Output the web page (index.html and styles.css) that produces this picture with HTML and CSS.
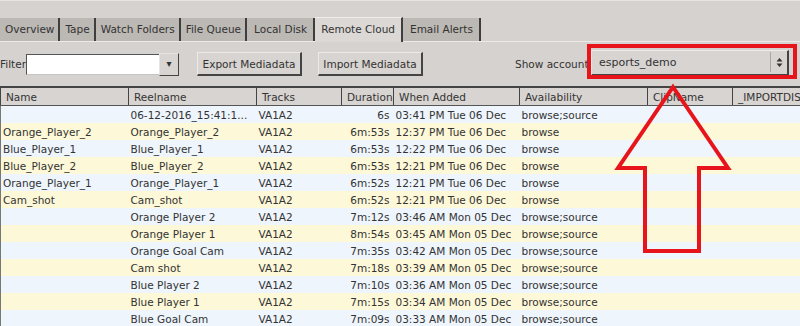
FILE: index.html
```html
<!DOCTYPE html>
<html lang="en">
<head>
    <meta charset="UTF-8">
    <title>Remote Cloud</title>
    <link rel="stylesheet" href="styles.css">
</head>
<body>
    <div class="window">
        <div class="tabs">
            <div class="tab">Overview</div>
            <div class="tab">Tape</div>
            <div class="tab">Watch Folders</div>
            <div class="tab">File Queue</div>
            <div class="tab wide">Local Disk</div>
            <div class="tab active">Remote Cloud</div>
            <div class="tab wide">Email Alerts</div>
        </div>

        <div class="toolbar">
            <label class="filter-label" for="filter">Filter</label>
            <input class="filter-input" id="filter" type="text">
            <div class="drop-btn">&#9662;</div>
            <button class="btn export">Export Mediadata</button>
            <button class="btn import">Import Mediadata</button>
            <span class="account-label">Show account:</span>
            <div class="combo">
                <span class="combo-text">esports_demo</span>
                <span class="combo-spin">
                    <svg width="7" height="11" viewBox="0 0 7 11"><path d="M0.5 4.5 L3.5 1 L6.5 4.5 Z M0.5 6.5 L3.5 10 L6.5 6.5 Z" fill="#333"/></svg>
                </span>
            </div>
        </div>

        <table class="grid">
            <colgroup>
                <col style="width:128px"><col style="width:128px"><col style="width:85px"><col style="width:52px">
                <col style="width:126px"><col style="width:128px"><col style="width:85px"><col style="width:68px">
            </colgroup>
            <thead>
                <tr>
                    <th>Name</th><th>Reelname</th><th>Tracks</th><th>Duration</th>
                    <th>When Added</th><th>Availability</th><th>ClipName</th><th>_IMPORTDIS</th>
                </tr>
            </thead>
            <tbody>
                <tr><td></td><td>06-12-2016_15:41:1...</td><td>VA1A2</td><td class="num">6s</td><td>03:41 PM Tue 06 Dec</td><td>browse;source</td><td></td><td></td></tr>
                <tr><td>Orange_Player_2</td><td>Orange_Player_2</td><td>VA1A2</td><td class="num">6m:53s</td><td>12:37 PM Tue 06 Dec</td><td>browse</td><td></td><td></td></tr>
                <tr><td>Blue_Player_1</td><td>Blue_Player_1</td><td>VA1A2</td><td class="num">6m:53s</td><td>12:22 PM Tue 06 Dec</td><td>browse</td><td></td><td></td></tr>
                <tr><td>Blue_Player_2</td><td>Blue_Player_2</td><td>VA1A2</td><td class="num">6m:53s</td><td>12:21 PM Tue 06 Dec</td><td>browse</td><td></td><td></td></tr>
                <tr><td>Orange_Player_1</td><td>Orange_Player_1</td><td>VA1A2</td><td class="num">6m:52s</td><td>12:21 PM Tue 06 Dec</td><td>browse</td><td></td><td></td></tr>
                <tr><td>Cam_shot</td><td>Cam_shot</td><td>VA1A2</td><td class="num">6m:52s</td><td>12:21 PM Tue 06 Dec</td><td>browse</td><td></td><td></td></tr>
                <tr><td></td><td>Orange Player 2</td><td>VA1A2</td><td class="num">7m:12s</td><td>03:46 AM Mon 05 Dec</td><td>browse;source</td><td></td><td></td></tr>
                <tr><td></td><td>Orange Player 1</td><td>VA1A2</td><td class="num">8m:54s</td><td>03:45 AM Mon 05 Dec</td><td>browse;source</td><td></td><td></td></tr>
                <tr><td></td><td>Orange Goal Cam</td><td>VA1A2</td><td class="num">7m:35s</td><td>03:42 AM Mon 05 Dec</td><td>browse;source</td><td></td><td></td></tr>
                <tr><td></td><td>Cam shot</td><td>VA1A2</td><td class="num">7m:18s</td><td>03:39 AM Mon 05 Dec</td><td>browse;source</td><td></td><td></td></tr>
                <tr><td></td><td>Blue Player 2</td><td>VA1A2</td><td class="num">7m:10s</td><td>03:36 AM Mon 05 Dec</td><td>browse;source</td><td></td><td></td></tr>
                <tr><td></td><td>Blue Player 1</td><td>VA1A2</td><td class="num">7m:15s</td><td>03:34 AM Mon 05 Dec</td><td>browse;source</td><td></td><td></td></tr>
                <tr><td></td><td>Blue Goal Cam</td><td>VA1A2</td><td class="num">7m:09s</td><td>03:33 AM Mon 05 Dec</td><td>browse;source</td><td></td><td></td></tr>
            </tbody>
        </table>

        <!-- red annotation drawn over the screenshot -->
        <svg class="markup" width="800" height="326" viewBox="0 0 800 326">
            <rect x="589" y="45" width="206" height="31" fill="none" stroke="#e8141c" stroke-width="4"/>
            <polygon points="673,86 728,167 699,167 699,250 645,250 645,167 618,167" fill="none" stroke="#e8141c" stroke-width="4"/>
        </svg>
    </div>
</body>
</html>
```

FILE: styles.css
```css
body {
    margin: 0;
    background: #d6d2cf;
    font-family: "DejaVu Sans", sans-serif;
    font-size: 10.5px;
    color: #333;
}
.window {
    position: relative;
    width: 800px;
    height: 326px;
    overflow: hidden;
    border-top: 1px solid #e6e3e1;
    box-sizing: border-box;
}
.tabs {
    display: flex;
    padding-top: 16px;
    height: 24px;
    border-bottom: 1px solid #ece9e7;
}
.tab {
    background: #bcb8b4;
    padding: 5px 4px 0 5px;
    margin-top: 1px;
    border-right: 2px solid #3e3e3e;
    color: #333;
    white-space: nowrap;
}
.tab.wide {
    padding-left: 7px;
    padding-right: 6px;
}
.tab.active {
    background: #dcd8d5;
    margin-top: 0;
    padding: 5px 6px 0 6px;
    border-top: 1px solid #efedeb;
    margin-bottom: -1px;
}
.toolbar {
    display: flex;
    align-items: center;
    height: 44px;
}
.filter-label {
    width: 26px;
}
.filter-input {
    width: 133px;
    height: 21px;
    box-sizing: border-box;
    border: 1px solid #555;
    border-right: none;
    border-bottom-color: #c8c4c1;
    background: #fff;
    margin: 0;
    padding: 0;
}
.drop-btn {
    width: 20px;
    height: 23px;
    box-sizing: border-box;
    border: 1px solid #e6e3e1;
    border-right-color: #444;
    border-bottom-color: #444;
    background: #d8d4d1;
    text-align: center;
    line-height: 20px;
    font-size: 10px;
}
.btn {
    font-family: inherit;
    font-size: inherit;
    color: #333;
    height: 24px;
    box-sizing: border-box;
    background: #d8d4d1;
    border: 1px solid #ece9e7;
    border-right: 2px solid #444;
    border-bottom: 2px solid #444;
    padding: 0 3px;
    margin: 0;
    white-space: nowrap;
}
.export {
    width: 105px;
    margin-left: 18px;
}
.import {
    width: 105px;
    margin-left: 16px;
}
.account-label {
    margin-left: 92px;
    width: 76px;
    white-space: nowrap;
}
.combo {
    display: flex;
    align-items: center;
    width: 198px;
    height: 26px;
    margin-top: -3px;
    box-sizing: border-box;
    background: #d8d4d1;
    border: 1px solid #ece9e7;
    border-right: 2px solid #444;
    border-bottom: 2px solid #444;
}
.combo-text {
    flex: 1;
    padding-left: 7px;
    font-size: 11px;
}
.combo-spin {
    width: 16px;
    height: 20px;
    border-left: 1px solid #aaa6a3;
    display: flex;
    align-items: center;
    justify-content: center;
}
.grid {
    width: 800px;
    table-layout: fixed;
    border-collapse: collapse;
    border-left: 1px solid #777;
}
.grid th {
    height: 17px;
    padding: 0 0 0 5px;
    background: #d8d4d1;
    border-top: 2px solid #444;
    border-left: 1px solid #444;
    border-bottom: 1px solid #555;
    font-weight: normal;
    text-align: left;
    white-space: nowrap;
    overflow: hidden;
}
.grid td {
    height: 17px;
    padding: 0 2px;
    white-space: nowrap;
    overflow: hidden;
}
.grid td.num {
    text-align: right;
    padding-right: 4px;
}
.grid tbody tr:nth-child(odd) {
    background: #eef5fc;
}
.grid tbody tr:nth-child(even) {
    background: #fdf8d8;
}
.markup {
    position: absolute;
    left: 0;
    top: 0;
    pointer-events: none;
}
```
